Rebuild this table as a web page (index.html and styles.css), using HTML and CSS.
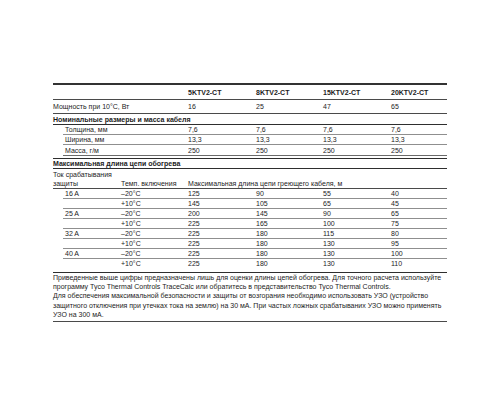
FILE: index.html
```html
<!DOCTYPE html>
<html lang="ru">
<head>
<meta charset="utf-8">
<link rel="stylesheet" href="styles.css">
</head>
<body>
<div class="page">
  <div class="t1">
    <div class="r head b"><span></span><span>5KTV2-CT</span><span>8KTV2-CT</span><span>15KTV2-CT</span><span>20KTV2-CT</span></div>
    <div class="r main"><span>Мощность при 10°С, Вт</span><span>16</span><span>25</span><span>47</span><span>65</span></div>
    <div class="r sec b"><span class="wide">Номинальные размеры и масса кабеля</span></div>
    <div class="r ind"><span>Толщина, мм</span><span>7,6</span><span>7,6</span><span>7,6</span><span>7,6</span></div>
    <div class="r ind"><span>Ширина, мм</span><span>13,3</span><span>13,3</span><span>13,3</span><span>13,3</span></div>
    <div class="r ind last"><span>Масса, г/м</span><span>250</span><span>250</span><span>250</span><span>250</span></div>
  </div>
  <div class="t2">
    <div class="q sec2 b"><span class="wide">Максимальная длина цепи обогрева</span></div>
    <div class="q two"><span>Ток срабатывания<br>защиты</span><span>Темп. включения</span><span class="wide2">Максимальная длина цепи греющего кабеля, м</span></div>
    <div class="q ind"><span>16 A</span><span>–20°C</span><span>125</span><span>90</span><span>55</span><span>40</span></div>
    <div class="q ind"><span></span><span>+10°C</span><span>145</span><span>105</span><span>65</span><span>45</span></div>
    <div class="q ind"><span>25 A</span><span>–20°C</span><span>200</span><span>145</span><span>90</span><span>65</span></div>
    <div class="q ind"><span></span><span>+10°C</span><span>225</span><span>165</span><span>100</span><span>75</span></div>
    <div class="q ind"><span>32 A</span><span>–20°C</span><span>225</span><span>180</span><span>115</span><span>80</span></div>
    <div class="q ind"><span></span><span>+10°C</span><span>225</span><span>180</span><span>130</span><span>95</span></div>
    <div class="q ind"><span>40 A</span><span>–20°C</span><span>225</span><span>180</span><span>130</span><span>100</span></div>
    <div class="q ind end"><span></span><span>+10°C</span><span>225</span><span>180</span><span>130</span><span>110</span></div>
  </div>
  <p class="note">Приведенные выше цифры предназначены лишь для оценки длины цепей обогрева. Для точного расчета используйте программу Tyco Thermal Controls TraceCalc или обратитесь в представительство Tyco Thermal Controls.<br>Для обеспечения максимальной безопасности и защиты от возгорания необходимо использовать УЗО (устройство защитного отключения при утечках тока на землю) на 30 мА. При частых ложных срабатываних УЗО можно применять УЗО на 300 мА.</p>
</div>
</body>
</html>
```

FILE: styles.css
```css
html, body {
  margin: 0;
  padding: 0;
  background: #fff;
}
.page {
  width: 394px;
  padding: 83px 53px 0 53px;
  font-family: "Liberation Sans", Arial, sans-serif;
  font-size: 7px;
  color: #1c1c1c;
}
.b { font-weight: bold; }
.r {
  display: grid;
  grid-template-columns: 135px 68px 67px 68px 56px;
  align-items: center;
  border-bottom: 1px solid #8f8f8f;
  height: 9px;
  line-height: 9px;
}
.r span, .q span { white-space: nowrap; }
.r .wide, .q .wide { grid-column: 1 / -1; }
.head {
  border-top: 2px solid #333;
  border-bottom: 1px solid #4a4a4a;
  height: 14px;
}
.main {
  border-bottom: 1px solid #4a4a4a;
  height: 13px;
}
.sec {
  border-bottom: 1.5px solid #2e2e2e;
  height: 10px;
}
.r.ind {
  margin-left: 10px;
  grid-template-columns: 125px 68px 67px 68px 56px;
}
.ind span:first-child { padding-left: 2px; }
.r.last {
  border-bottom: 1px solid #6a6a6a;
  height: 10px;
}
.t2 { margin-top: 2px; }
.q {
  display: grid;
  grid-template-columns: 68px 67px 68px 67px 68px 56px;
  align-items: center;
  border-bottom: 1px solid #8f8f8f;
  height: 9px;
  line-height: 9px;
}
.sec2 {
  border-top: 1.5px solid #2e2e2e;
  border-bottom: 1.5px solid #2e2e2e;
  height: 9px;
}
.two {
  height: 19px;
  align-items: end;
  line-height: 8.5px;
  border-bottom: 1px solid #4a4a4a;
}
.two .wide2 { grid-column: 3 / -1; }
.q.ind {
  margin-left: 10px;
  grid-template-columns: 58px 67px 68px 67px 68px 56px;
}
.q.end {
  border-bottom: none;
  height: 13px;
  align-items: start;
  line-height: 10px;
}
.note {
  margin: 0;
  border-top: 1px solid #2e2e2e;
  border-bottom: 1px solid #4a4a4a;
  line-height: 9.2px;
  padding: 0 0 2px 0;
}
```
